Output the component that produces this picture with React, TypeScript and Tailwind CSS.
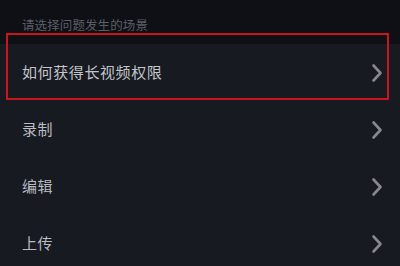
const rows = ["如何获得长视频权限", "录制", "编辑", "上传"];

function Chevron() {
  return (
    <svg width="12" height="20" viewBox="0 0 12 20" fill="none" className="text-[#86888d]">
      <polyline
        points="2.5,2.5 9.5,10 2.5,17.5"
        stroke="currentColor"
        strokeWidth="2.6"
        strokeLinecap="round"
        strokeLinejoin="round"
      />
    </svg>
  );
}

export default function App() {
  return (
    <div
      className="relative w-[400px] h-[266px] overflow-hidden bg-[#171a21]"
      style={{ fontFamily: '"Noto Sans CJK SC", "Noto Sans", sans-serif' }}
    >
      {/* Header */}
      <div className="h-[44px] bg-[#0e1016] pl-[22px] pt-[17px]">
        <p className="text-[12.5px] leading-[16px] tracking-[0.1px] text-[#5a5e66]">
          请选择问题发生的场景
        </p>
      </div>

      {/* List */}
      <div className="flex flex-col">
        {rows.map((label, i) => (
          <div key={label} className="h-[57px] flex items-center justify-between pl-[22px] pr-[17px]">
            <span
              className={
                i === 0
                  ? "text-[15px] tracking-[0.6px] text-[#c3c5c9]"
                  : "text-[15px] tracking-[0.5px] text-[#babcc0]"
              }
            >
              {label}
            </span>
            <Chevron />
          </div>
        ))}
      </div>

      {/* Highlight box */}
      <div className="absolute left-[6px] top-[33px] w-[383px] h-[67px] border-2 border-[#cc141c]" />
    </div>
  );
}
